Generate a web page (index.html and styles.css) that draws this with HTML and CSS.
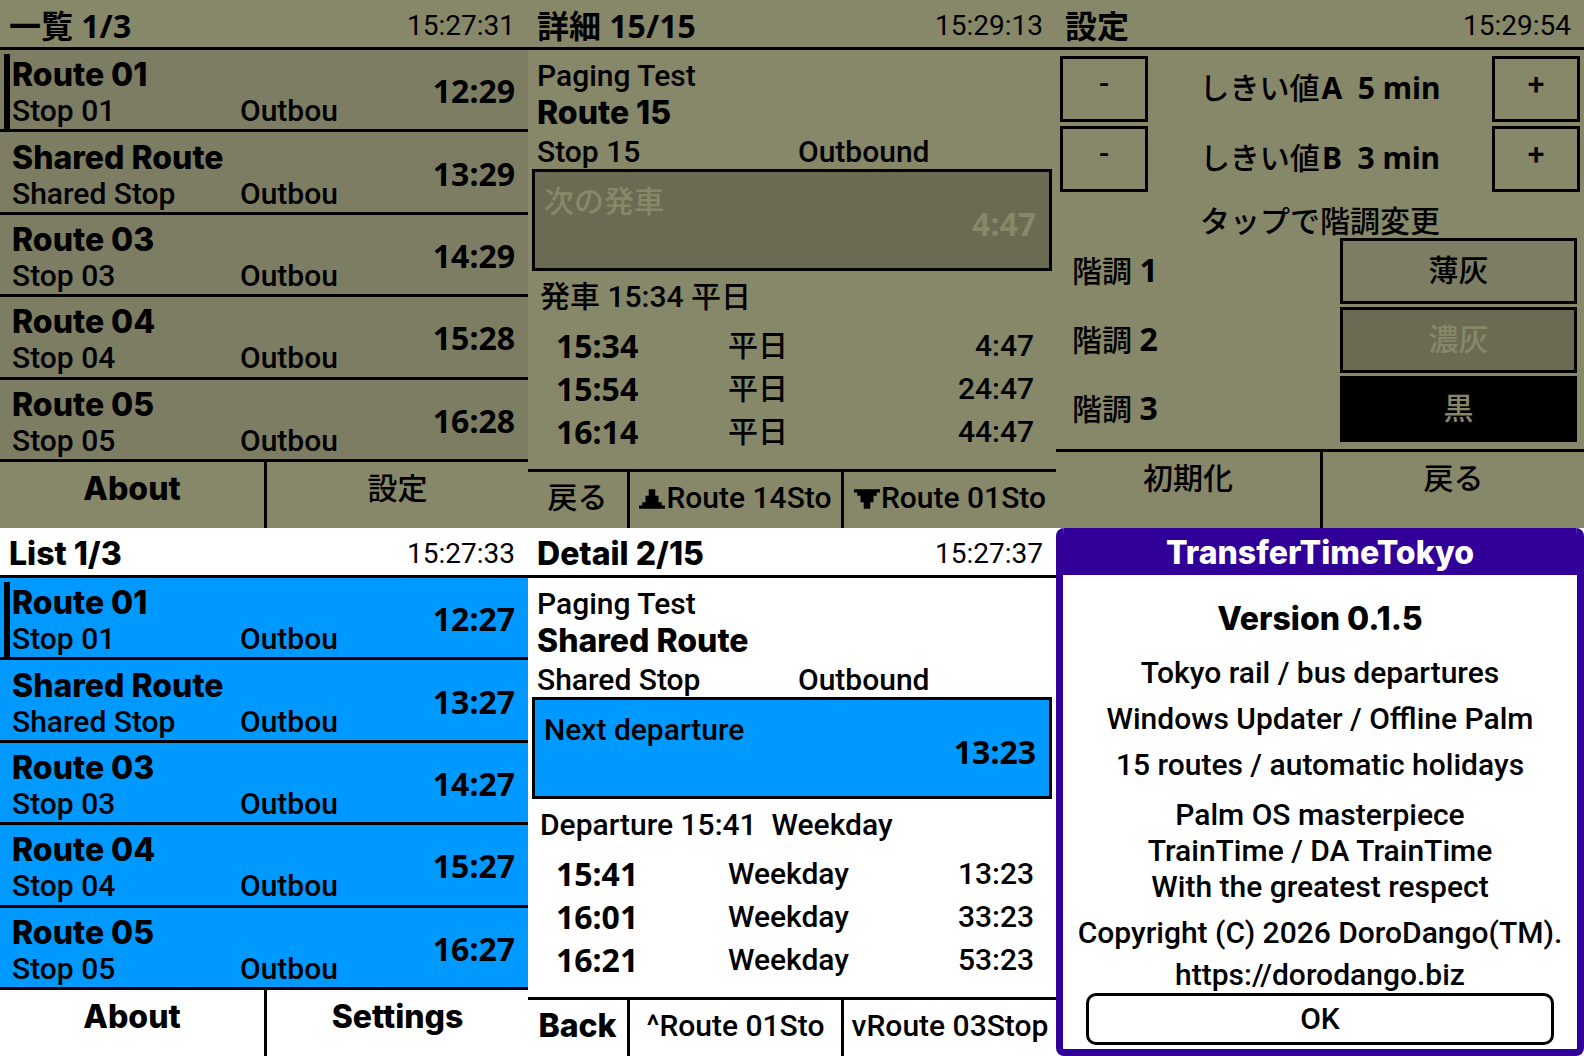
FILE: index.html
```html
<!DOCTYPE html>
<html lang="en">
<head>
<meta charset="utf-8">
<meta name="viewport" content="width=device-width, initial-scale=1">
<title>TransferTimeTokyo</title>
<link rel="stylesheet" href="styles.css">
</head>
<body>
<main class="gallery">

  <section class="screen lcd" lang="ja">
    <header class="bar"><h2 class="bar-title">一覧 1/3</h2><time class="clock">15:27:31</time></header>
    <ul class="routes">
      <li class="route selected"><span class="marker"></span><div class="route-info"><strong class="name">Route 01</strong><div class="leg"><span>Stop 01</span><span>Outbou</span></div></div><strong class="wait">12:29</strong></li>
      <li class="route"><span class="marker"></span><div class="route-info"><strong class="name">Shared Route</strong><div class="leg"><span>Shared Stop</span><span>Outbou</span></div></div><strong class="wait">13:29</strong></li>
      <li class="route"><span class="marker"></span><div class="route-info"><strong class="name">Route 03</strong><div class="leg"><span>Stop 03</span><span>Outbou</span></div></div><strong class="wait">14:29</strong></li>
      <li class="route"><span class="marker"></span><div class="route-info"><strong class="name">Route 04</strong><div class="leg"><span>Stop 04</span><span>Outbou</span></div></div><strong class="wait">15:28</strong></li>
      <li class="route"><span class="marker"></span><div class="route-info"><strong class="name">Route 05</strong><div class="leg"><span>Stop 05</span><span>Outbou</span></div></div><strong class="wait">16:28</strong></li>
    </ul>
    <footer class="actions halves"><button class="strong">About</button><button>設定</button></footer>
  </section>

  <section class="screen lcd" lang="ja">
    <header class="bar"><h2 class="bar-title">詳細 15/15</h2><time class="clock">15:29:13</time></header>
    <div class="detail">
      <p class="group">Paging Test</p>
      <strong class="name">Route 15</strong>
      <div class="leg"><span>Stop 15</span><span>Outbound</span></div>
    </div>
    <div class="next"><span>次の発車</span><strong class="wait">4:47</strong></div>
    <p class="departure">発車 15:34 平日</p>
    <table class="times">
      <tr><th>15:34</th><td>平日</td><td>4:47</td></tr>
      <tr><th>15:54</th><td>平日</td><td>24:47</td></tr>
      <tr><th>16:14</th><td>平日</td><td>44:47</td></tr>
    </table>
    <footer class="actions paging"><button>戻る</button><button><svg class="arrow" viewBox="0 0 8 6" aria-hidden="true"><path d="M3 0h2v2h1v2h1v1h1v1H0V5h1V4h1V2h1z"/></svg>Route 14Sto</button><button><svg class="arrow" viewBox="0 0 8 6" aria-hidden="true"><path d="M0 0h8v1H7v1H6v2H5v2H3V4H2V2H1V1H0z"/></svg>Route 01Sto</button></footer>
  </section>

  <section class="screen lcd" lang="ja">
    <header class="bar"><h2 class="bar-title">設定</h2><time class="clock">15:29:54</time></header>
    <div class="steppers">
      <div class="stepper"><button class="box">-</button><p>しきい値<strong>A&nbsp; 5 min</strong></p><button class="box">+</button></div>
      <div class="stepper"><button class="box">-</button><p>しきい値<strong>B&nbsp; 3 min</strong></p><button class="box">+</button></div>
    </div>
    <p class="hint">タップで階調変更</p>
    <div class="tones">
      <div class="tone"><label for="tone1">階調 <strong>1</strong></label><button id="tone1" class="box light">薄灰</button></div>
      <div class="tone"><label for="tone2">階調 <strong>2</strong></label><button id="tone2" class="box dark">濃灰</button></div>
      <div class="tone"><label for="tone3">階調 <strong>3</strong></label><button id="tone3" class="box black">黒</button></div>
    </div>
    <footer class="actions halves settings-actions"><button>初期化</button><button>戻る</button></footer>
  </section>

  <section class="screen color">
    <header class="bar"><h2 class="bar-title">List 1/3</h2><time class="clock">15:27:33</time></header>
    <ul class="routes">
      <li class="route selected"><span class="marker"></span><div class="route-info"><strong class="name">Route 01</strong><div class="leg"><span>Stop 01</span><span>Outbou</span></div></div><strong class="wait">12:27</strong></li>
      <li class="route"><span class="marker"></span><div class="route-info"><strong class="name">Shared Route</strong><div class="leg"><span>Shared Stop</span><span>Outbou</span></div></div><strong class="wait">13:27</strong></li>
      <li class="route"><span class="marker"></span><div class="route-info"><strong class="name">Route 03</strong><div class="leg"><span>Stop 03</span><span>Outbou</span></div></div><strong class="wait">14:27</strong></li>
      <li class="route"><span class="marker"></span><div class="route-info"><strong class="name">Route 04</strong><div class="leg"><span>Stop 04</span><span>Outbou</span></div></div><strong class="wait">15:27</strong></li>
      <li class="route"><span class="marker"></span><div class="route-info"><strong class="name">Route 05</strong><div class="leg"><span>Stop 05</span><span>Outbou</span></div></div><strong class="wait">16:27</strong></li>
    </ul>
    <footer class="actions halves"><button class="strong">About</button><button class="strong">Settings</button></footer>
  </section>

  <section class="screen color">
    <header class="bar"><h2 class="bar-title">Detail 2/15</h2><time class="clock">15:27:37</time></header>
    <div class="detail">
      <p class="group">Paging Test</p>
      <strong class="name">Shared Route</strong>
      <div class="leg"><span>Shared Stop</span><span>Outbound</span></div>
    </div>
    <div class="next"><span>Next departure</span><strong class="wait">13:23</strong></div>
    <p class="departure">Departure 15:41&nbsp; Weekday</p>
    <table class="times">
      <tr><th>15:41</th><td>Weekday</td><td>13:23</td></tr>
      <tr><th>16:01</th><td>Weekday</td><td>33:23</td></tr>
      <tr><th>16:21</th><td>Weekday</td><td>53:23</td></tr>
    </table>
    <footer class="actions paging"><button class="strong">Back</button><button>^Route 01Sto</button><button>vRoute 03Stop</button></footer>
  </section>

  <section class="screen about">
    <h2 class="about-title">TransferTimeTokyo</h2>
    <div class="about-body">
      <p class="version">Version 0.1.5</p>
      <p class="fact">Tokyo rail / bus departures</p>
      <p class="fact">Windows Updater / Offline Palm</p>
      <p class="fact">15 routes / automatic holidays</p>
      <p class="credit">Palm OS masterpiece<br>TrainTime / DA TrainTime<br>With the greatest respect</p>
      <p class="copyright">Copyright (C) 2026 DoroDango(TM).</p>
      <a class="site" href="https://dorodango.biz">https://dorodango.biz</a>
      <button class="ok">OK</button>
    </div>
  </section>

</main>
</body>
</html>
```
FILE: styles.css
```css
* {
  box-sizing: border-box;
}

body {
  margin: 0;
  background: #fff;
  color: #000;
  font: 500 30px/36px Roboto, "Noto Sans CJK JP", sans-serif;
}

h2,
p,
ul {
  margin: 0;
  padding: 0;
}

button {
  padding: 0;
  border: 0;
  background: none;
  color: inherit;
  font: inherit;
  white-space: nowrap;
}

strong,
th,
.bar-title {
  font-family: "Noto Sans", "Noto Sans CJK JP", sans-serif;
  font-size: 32px;
  font-weight: 700;
}

.name,
.strong,
.color .bar-title,
.version,
.about-title {
  font-family: Inter, "Noto Sans CJK JP", sans-serif;
  font-size: 32px;
  font-weight: 800;
}

.gallery {
  display: grid;
  grid-template-columns: repeat(3, minmax(0, 1fr));
  grid-auto-rows: minmax(50vh, auto);
}

.screen {
  display: flex;
  flex-direction: column;
  overflow: hidden;
}

.lcd {
  --row: #7d7d63;
  --next: #6b6b53;
  --next-text: #87876a;
  background: #87876a;
}

.color {
  --row: #0099ff;
  --next: #0099ff;
  --next-text: #000;
  background: #fff;
}

/* Title bar */

.bar {
  display: flex;
  justify-content: space-between;
  align-items: center;
  height: 50px;
  padding: 4px 13px 0 9px;
  border-bottom: 3px solid #000;
}

.clock {
  font-size: 28px;
  font-weight: 400;
}

/* Route list */

.routes {
  display: grid;
  grid-auto-rows: 1fr;
  flex: 1;
  list-style: none;
}

.route {
  display: flex;
  align-items: center;
  gap: 2px;
  padding: 0 13px 0 4px;
  border-bottom: 3px solid #000;
  background: var(--row);
}

.marker {
  align-self: stretch;
  width: 6px;
  margin-top: 4px;
}

.selected .marker {
  background: #000;
}

.route-info {
  flex: 1;
  padding-top: 6px;
}

.route .wait {
  padding-top: 3px;
}

.name {
  display: block;
  line-height: 37px;
}

.leg {
  display: grid;
  grid-template-columns: 228px 1fr;
}

/* Bottom buttons */

.actions {
  display: grid;
  height: 66px;
}

.actions button {
  display: flex;
  justify-content: center;
  align-items: flex-start;
  padding-top: 9px;
}

.actions button + button {
  border-left: 3px solid #000;
}

.halves {
  grid-template-columns: 1fr 1fr;
}

.paging {
  grid-template-columns: 99fr 214fr 215fr;
  height: 59px;
  margin-top: auto;
  border-top: 3px solid #000;
}

.paging button {
  padding-top: 8px;
}

.settings-actions {
  height: 79px;
  margin-top: auto;
  border-top: 3px solid #000;
}

.arrow {
  width: 26px;
  height: 20px;
  margin: 9px 1px 0 0;
}

/* Detail */

.detail {
  padding: 8px 9px 0;
}

.detail .leg {
  grid-template-columns: 261px 1fr;
  padding-top: 3px;
}

.next {
  display: flex;
  justify-content: space-between;
  height: 102px;
  margin: -1px 4px 0;
  padding: 12px 13px 0 9px;
  border: 3px solid #000;
  background: var(--next);
  color: var(--next-text);
}

.next .wait {
  padding-top: 22px;
}

.departure {
  padding: 8px 12px 9px;
}

.times {
  border-collapse: collapse;
}

.times tr {
  height: 43px;
}

.times th,
.times td {
  padding: 0;
  text-align: left;
}

.times th {
  width: 200px;
  padding-left: 28px;
}

.times td:last-child {
  padding-right: 22px;
  text-align: right;
}

/* Settings */

.steppers {
  display: grid;
  gap: 4px;
  padding: 6px 4px 0;
}

.stepper {
  display: grid;
  grid-template-columns: 88px 1fr 88px;
  height: 66px;
  text-align: center;
}

.stepper p {
  padding-top: 14px;
}

.stepper strong {
  margin-left: 2px;
  font-size: 30px;
}

.stepper .box {
  padding-bottom: 10px;
}

.box {
  border: 3px solid #000;
}

.hint {
  padding-top: 14px;
  line-height: 32px;
  text-align: center;
}

.tones {
  display: grid;
  gap: 3px;
  padding: 0 7px 0 16px;
}

.tone {
  display: grid;
  grid-template-columns: 1fr 237px;
  align-items: center;
}

.tone .box {
  height: 66px;
}

.light {
  background: #7d7d63;
}

.dark {
  background: #6b6b53;
  color: #87876a;
}

.black {
  background: #000;
  color: #87876a;
}

/* About dialog */

.about {
  border: 7px solid #310099;
  border-top: 0;
  border-radius: 8px;
  background: #fff;
  text-align: center;
}

.about-title {
  height: 47px;
  padding-top: 7px;
  background: #310099;
  color: #fff;
}

.about-body {
  display: flex;
  flex-direction: column;
  flex: 1;
  padding: 26px 0 4px;
}

.version {
  padding-bottom: 18px;
}

.fact {
  padding-bottom: 10px;
}

.credit {
  padding: 4px 0 10px;
}

.copyright {
  padding-bottom: 7px;
  white-space: nowrap;
}

.site {
  color: inherit;
  line-height: 34px;
  text-decoration: none;
}

.ok {
  height: 52px;
  margin: auto 23px 0;
  border: 3px solid #000;
  border-radius: 10px;
}
```
